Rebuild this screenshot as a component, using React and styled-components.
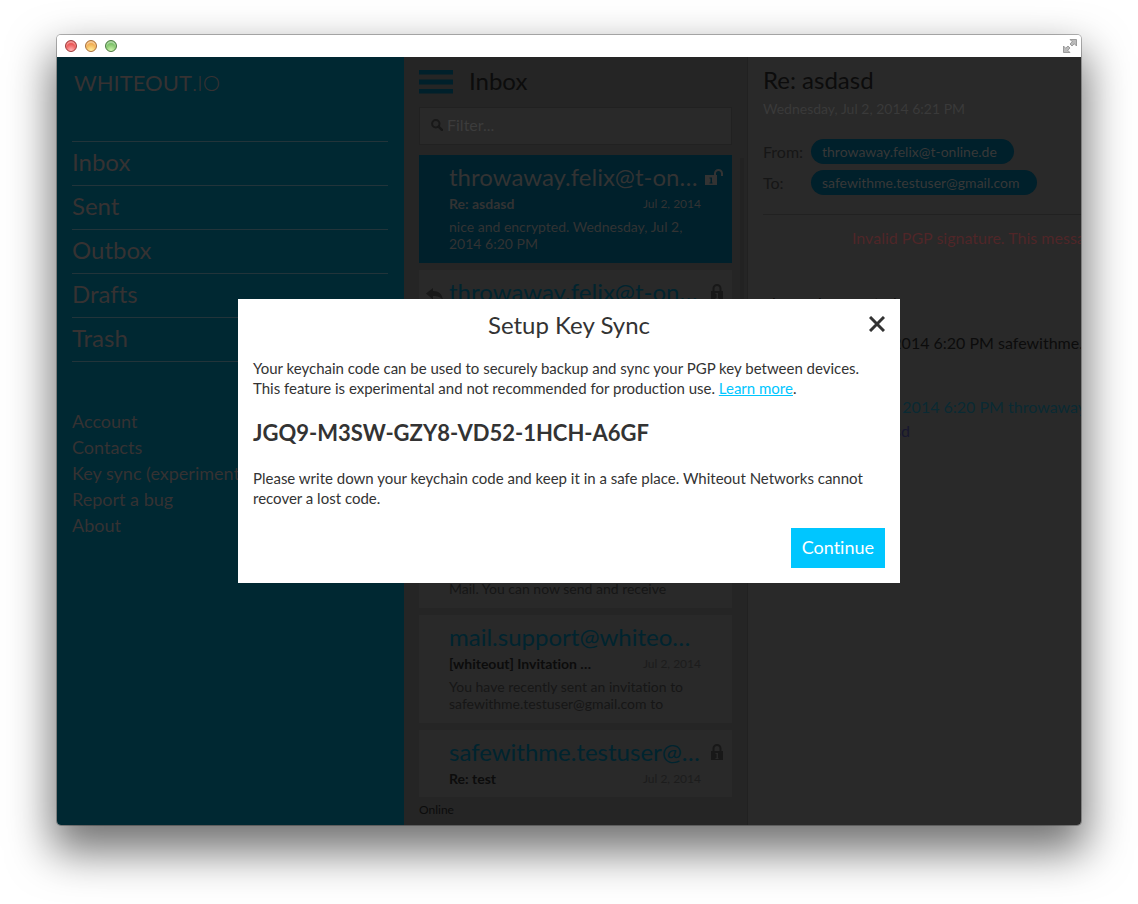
import React from "react";
import styled, { createGlobalStyle, css } from "styled-components";

const GlobalStyle = createGlobalStyle`
  *, *::before, *::after { box-sizing: border-box; }
  body {
    margin: 0;
    background: #fff;
    color: #333;
    font-family: Lato, "Noto Sans", "Open Sans", sans-serif;
    font-size: 16px;
    font-variant-ligatures: none;
    line-height: 20px;
  }
  h1, h2, h3, p, ul, dl, dd { margin: 0; padding: 0; }
  ul { list-style: none; }
  button, input { font: inherit; }
  button { border: 0; background: none; padding: 0; cursor: pointer; }
`;

const color = {
  sidebar: "#002832",
  sidebarText: "#363232",
  sidebarLine: "#22343a",
  list: "#252525",
  pane: "#292929",
  accent: "#00202b",
  accentText: "#00242f",
  dark: "#0c0c0c",
  muted: "#161616",
  icon: "#181818",
  line: "#212121",
  cyan: "#00c6ff",
};

/* ---------- window ---------- */

const Desktop = styled.div`
  display: flex;
  height: 100vh;
  min-height: 500px;
  padding: 35px 57px 79px;
`;

const Window = styled.div`
  display: flex;
  flex: 1;
  flex-direction: column;
  min-width: 0;
  border-radius: 4px;
  overflow: hidden;
  box-shadow: 0 0 0 1px rgba(0, 0, 0, 0.28), 0 22px 44px 5px rgba(0, 0, 0, 0.55);
`;

const TitleBar = styled.header`
  display: flex;
  flex: none;
  align-items: center;
  justify-content: space-between;
  height: 22px;
  padding: 0 4px 0 8px;
  background: #fff;
`;

const Lights = styled.div`
  display: flex;
  gap: 8px;
`;

const Light = styled.button`
  width: 12px;
  height: 12px;
  border-radius: 50%;
  border: 1px solid ${(p) => p.$rim};
  background: radial-gradient(circle at 50% 95%, ${(p) => p.$glow} 0, ${(p) => p.$base} 75%);
  box-shadow: inset 0 2px 1px rgba(255, 255, 255, 0.45);
`;

const Expand = styled.button`
  display: flex;
`;

const AppArea = styled.div`
  position: relative;
  display: grid;
  flex: 1;
  grid-template-columns: 347fr 344fr 333fr;
  grid-template-rows: minmax(0, 1fr);
  min-height: 0;
`;

/* ---------- sidebar ---------- */

const Sidebar = styled.aside`
  min-width: 0;
  padding: 0 16px 0 15px;
  overflow: hidden;
  background: ${color.sidebar};
  color: ${color.sidebarText};
`;

const Logo = styled.h1`
  height: 84px;
  padding: 10px 2px;
  font-size: 22px;
  font-weight: 400;
  line-height: 32px;
`;

const LogoSuffix = styled.span`
  font-weight: 300;
`;

const Folders = styled.ul`
  border-bottom: 1px solid ${color.sidebarLine};
`;

const Folder = styled.li`
  height: 44px;
  border-top: 1px solid ${color.sidebarLine};
  font-size: 24px;
  line-height: 40px;
`;

const NavLink = styled.a`
  display: block;
  color: inherit;
  text-decoration: none;
  white-space: nowrap;
`;

const Secondary = styled.ul`
  margin-top: 46px;
  font-size: 18px;
  line-height: 26px;
`;

/* ---------- message list ---------- */

const ListPane = styled.section`
  display: flex;
  flex-direction: column;
  min-width: 0;
  padding: 0 15px;
  border-right: 1px solid ${color.line};
  background: ${color.list};
`;

const ListHeader = styled.header`
  display: flex;
  flex: none;
  align-items: center;
  gap: 16px;
  height: 50px;
`;

const MenuButton = styled.button`
  display: flex;
`;

const PaneTitle = styled.h2`
  color: ${color.dark};
  font-size: 24px;
  font-weight: 400;
  line-height: 28px;
  padding-bottom: 2px;
`;

const Filter = styled.label`
  display: flex;
  flex: none;
  align-items: center;
  gap: 4px;
  height: 38px;
  padding: 0 11px 2px;
  border: 1px solid ${color.line};
  background: ${color.pane};
`;

const FilterInput = styled.input`
  flex: 1;
  min-width: 0;
  padding: 0;
  border: 0;
  outline: 0;
  background: none;
  color: ${color.dark};
  &::placeholder { color: #3c3c3c; opacity: 1; }
`;

const Scroller = styled.div`
  display: flex;
  flex: 1;
  gap: 8px;
  min-height: 0;
  margin: 10px -12px 0 0;
  overflow: hidden;
`;

const Cards = styled.ul`
  display: flex;
  flex: 1;
  flex-direction: column;
  gap: 7px;
  min-width: 0;
`;

const Thumb = styled.div`
  width: 4px;
  height: 60%;
  margin-top: 3px;
  background: #222;
`;

const Card = styled.li`
  display: grid;
  flex: none;
  grid-template-columns: 30px minmax(0, 1fr) 31px;
  height: 108px;
  background: ${color.pane};
  color: ${color.muted};
  --name: ${color.accentText};
  --subject: ${color.dark};
  --date: #1c1c1c;
  ${(p) =>
    p.$selected &&
    css`
      background: ${color.accent};
      color: #333;
      --name: #333;
      --subject: #333;
      --date: #333;
    `}
`;

const ReplyMark = styled.div`
  display: flex;
  justify-content: center;
  padding-top: 18px;
`;

const LockMark = styled.div`
  display: flex;
  justify-content: flex-end;
  padding: 14px 9px 0 0;
`;

const CardMain = styled.div`
  padding-top: 7px;
  white-space: nowrap;
`;

const Sender = styled.h3`
  color: var(--name);
  font-size: 24px;
  font-weight: 400;
  line-height: 30px;
`;

const CardMeta = styled.div`
  display: flex;
  align-items: center;
  justify-content: space-between;
  height: 24px;
`;

const Subject = styled.strong`
  color: var(--subject);
  font-size: 14px;
`;

const CardDate = styled.time`
  color: var(--date);
  font-size: 12px;
`;

const Preview = styled.p`
  margin-top: 2px;
  font-size: 14px;
  line-height: 17px;
`;

const Status = styled.footer`
  flex: none;
  height: 28px;
  color: ${color.dark};
  font-size: 12px;
  line-height: 26px;
`;

/* ---------- reading pane ---------- */

const ReadPane = styled.section`
  min-width: 0;
  padding: 9px 0 0 15px;
  overflow: hidden;
  background: ${color.pane};
  color: ${color.muted};
  white-space: nowrap;
`;

const ReadDate = styled.p`
  margin: 3px 0 20px;
  color: #3a3a3a;
  font-size: 14px;
`;

const People = styled.dl`
  display: grid;
  grid-template-columns: 48px max-content;
  row-gap: 6px;
  padding-bottom: 19px;
  border-bottom: 1px solid ${color.line};
  line-height: 25px;
`;

const Pill = styled.dd`
  justify-self: start;
  padding: 0 17px 0 11px;
  border-radius: 13px;
  background: ${color.accent};
  color: #383838;
  font-size: 14px;
`;

const Warning = styled.p`
  margin: 13px 0 45px 89px;
  color: #502628;
`;

const Paragraph = styled.p`
  margin-bottom: 20px;
  color: ${color.dark};
`;

const Quote = styled.blockquote`
  margin: 42px 0 0;
  padding-left: 10px;
  color: #0a2a33;
  line-height: 24px;
`;

const QuoteLink = styled.a`
  color: #17172f;
  text-decoration: none;
`;

/* ---------- dialog ---------- */

const Overlay = styled.div`
  position: absolute;
  inset: 0;
  display: flex;
  align-items: center;
  justify-content: center;
`;

const Dialog = styled.section`
  display: flex;
  flex-direction: column;
  gap: 20px;
  width: 662px;
  max-width: 94%;
  padding: 15px;
  background: #fff;
  color: #333;
  font-size: 15px;
`;

const DialogHeader = styled.header`
  display: grid;
  grid-template-columns: 16px 1fr 16px;
  align-items: start;
  height: 24px;
`;

const DialogTitle = styled.h2`
  grid-column: 2;
  font-size: 24px;
  font-weight: 400;
  line-height: 22px;
  text-align: center;
`;

const CloseButton = styled.button`
  display: flex;
  padding-top: 2px;
  color: #333;
`;

const LearnMore = styled.a`
  color: ${color.cyan};
`;

const KeyCode = styled.p`
  font-size: 22px;
  font-weight: 700;
  line-height: 30px;
`;

const Continue = styled.button`
  align-self: flex-end;
  height: 40px;
  padding: 0 11px 2px;
  background: ${color.cyan};
  color: #fff;
  font-size: 18px;
`;

/* ---------- icons ---------- */

const ExpandIcon = () => (
  <svg width="14" height="14" viewBox="0 0 14 14" fill="#bbb" stroke="#8c8c8c" strokeWidth="0.8">
    <path d="M7 .5h6.500V7l-2.200-2.200L9 7 7 5l2.200-2.300z" />
    <path d="M7 13.500H.5V7l2.200 2.200L5 7l2 2-2.200 2.300z" />
  </svg>
);

const MenuIcon = () => (
  <svg width="34" height="24" viewBox="0 0 34 24" fill={color.accent}>
    <path d="M0 0h34v4.500H0zM0 9.500h34v5H0zM0 19h34v4.500H0z" />
  </svg>
);

const SearchIcon = () => (
  <svg width="12" height="12" viewBox="0 0 12 12" fill="none" stroke={color.icon}>
    <circle cx="4.800" cy="4.800" r="3.700" strokeWidth="2" />
    <path d="M7.600 7.600l3.500 3.500" strokeWidth="2.400" strokeLinecap="round" />
  </svg>
);

const LockIcon = () => (
  <svg width="12" height="16" viewBox="0 0 12 16">
    <path d="M2.500 8V4.500a3.500 3.500 0 0 1 7 0V8" fill="none" stroke={color.icon} strokeWidth="2" />
    <path fillRule="evenodd" fill={color.icon} d="M0 7h12v9H0zM4.500 9v1h1v4h-1v1h3v-1h-.500V9z" />
  </svg>
);

const UnlockIcon = () => (
  <svg width="18" height="16" viewBox="0 0 18 16">
    <path d="M10 8V4.500a3.500 3.500 0 0 1 7 0V7" fill="none" stroke="#333" strokeWidth="2" />
    <path fillRule="evenodd" fill="#333" d="M0 6h12v10H0zM4.500 8.500v1h1v4h-1v1h3v-1h-.500v-5z" />
  </svg>
);

const ReplyIcon = () => (
  <svg width="17" height="15" viewBox="0 0 17 15" fill={color.icon}>
    <path d="M7 0v3c6 0 9 3 10 9-2.500-3-5-4-10-4v3.500L0 5.500z" />
  </svg>
);

const CloseIcon = () => (
  <svg width="16" height="16" viewBox="0 0 16 16" fill="none" stroke="currentColor" strokeWidth="3">
    <path d="M1 1l14 14M15 1L1 15" />
  </svg>
);

/* ---------- data ---------- */

const folders = ["Inbox", "Sent", "Outbox", "Drafts", "Trash"];
const links = ["Account", "Contacts", "Key sync (experimental)", "Report a bug", "About"];

const messages = [
  {
    from: "throwaway.felix@t-on…",
    subject: "Re: asdasd",
    preview: ["nice and encrypted. Wednesday, Jul 2,", "2014 6:20 PM"],
    lock: "open",
    selected: true,
  },
  {
    from: "throwaway.felix@t-on…",
    subject: "asdasd",
    preview: ["asdasd"],
    lock: "closed",
    replied: true,
  },
  { from: "safewithme.testuser@…", subject: "test", preview: ["test"], lock: "closed" },
  {
    from: "mail.support@whiteo…",
    subject: "Welcome",
    preview: ["Thank you for joining Whiteout", "Mail. You can now send and receive"],
  },
  {
    from: "mail.support@whiteo…",
    subject: "[whiteout] Invitation …",
    preview: ["You have recently sent an invitation to", "safewithme.testuser@gmail.com to"],
  },
  { from: "safewithme.testuser@…", subject: "Re: test", preview: ["test"], lock: "closed" },
];

function MessageCard({ message }) {
  const { from, subject, preview, lock, replied, selected } = message;
  return (
    <Card $selected={selected}>
      <ReplyMark>{replied && <ReplyIcon />}</ReplyMark>
      <CardMain>
        <Sender>{from}</Sender>
        <CardMeta>
          <Subject>{subject}</Subject>
          <CardDate dateTime="2014-07-02">Jul 2, 2014</CardDate>
        </CardMeta>
        <Preview>
          {preview.map((line, i) => (
            <React.Fragment key={line}>
              {i > 0 && <br />}
              {line}
            </React.Fragment>
          ))}
        </Preview>
      </CardMain>
      <LockMark>
        {lock === "open" && <UnlockIcon />}
        {lock === "closed" && <LockIcon />}
      </LockMark>
    </Card>
  );
}

export default function App() {
  return (
    <>
      <GlobalStyle />
      <Desktop>
        <Window>
          <TitleBar>
            <Lights>
              <Light aria-label="Close window" $rim="#9c3a3a" $glow="#ffb5b5" $base="#e8403f" />
              <Light aria-label="Minimize window" $rim="#a8703a" $glow="#fff0a0" $base="#f0a040" />
              <Light aria-label="Zoom window" $rim="#4b7a40" $glow="#d0f5b0" $base="#6ab858" />
            </Lights>
            <Expand aria-label="Full screen"><ExpandIcon /></Expand>
          </TitleBar>
          <AppArea>
            <Sidebar>
              <Logo>WHITEOUT<LogoSuffix>.IO</LogoSuffix></Logo>
              <nav>
                <Folders>
                  {folders.map((name) => (
                    <Folder key={name}><NavLink href="#">{name}</NavLink></Folder>
                  ))}
                </Folders>
                <Secondary>
                  {links.map((name) => (
                    <li key={name}><NavLink href="#">{name}</NavLink></li>
                  ))}
                </Secondary>
              </nav>
            </Sidebar>

            <ListPane>
              <ListHeader>
                <MenuButton aria-label="Menu"><MenuIcon /></MenuButton>
                <PaneTitle>Inbox</PaneTitle>
              </ListHeader>
              <Filter>
                <SearchIcon />
                <FilterInput type="text" placeholder="Filter..." aria-label="Filter" />
              </Filter>
              <Scroller>
                <Cards>
                  {messages.map((message, i) => (
                    <MessageCard key={i} message={message} />
                  ))}
                </Cards>
                <Thumb />
              </Scroller>
              <Status>Online</Status>
            </ListPane>

            <ReadPane>
              <PaneTitle>Re: asdasd</PaneTitle>
              <ReadDate>Wednesday, Jul 2, 2014 6:21 PM</ReadDate>
              <People>
                <dt>From:</dt>
                <Pill>throwaway.felix@t-online.de</Pill>
                <dt>To:</dt>
                <Pill>safewithme.testuser@gmail.com</Pill>
              </People>
              <Warning>Invalid PGP signature. This message could have been tampered with.</Warning>
              <Paragraph>nice and encrypted.</Paragraph>
              <Paragraph>Wednesday, Jul 2, 2014 6:20 PM safewithme.testuser@gmail.com</Paragraph>
              <Quote>
                Wednesday, Jul 2, 2014 6:20 PM throwaway.felix@t-online.de
                <br />
                <QuoteLink href="#">Subject line: asdasd</QuoteLink>
              </Quote>
            </ReadPane>

            <Overlay>
              <Dialog role="dialog" aria-labelledby="dialog-title">
                <DialogHeader>
                  <DialogTitle id="dialog-title">Setup Key Sync</DialogTitle>
                  <CloseButton aria-label="Close"><CloseIcon /></CloseButton>
                </DialogHeader>
                <p>
                  Your keychain code can be used to securely backup and sync your PGP key between devices.
                  This feature is experimental and not recommended for production use.{" "}
                  <LearnMore href="#">Learn more</LearnMore>.
                </p>
                <KeyCode>JGQ9-M3SW-GZY8-VD52-1HCH-A6GF</KeyCode>
                <p>
                  Please write down your keychain code and keep it in a safe place. Whiteout Networks
                  cannot recover a lost code.
                </p>
                <Continue>Continue</Continue>
              </Dialog>
            </Overlay>
          </AppArea>
        </Window>
      </Desktop>
    </>
  );
}
